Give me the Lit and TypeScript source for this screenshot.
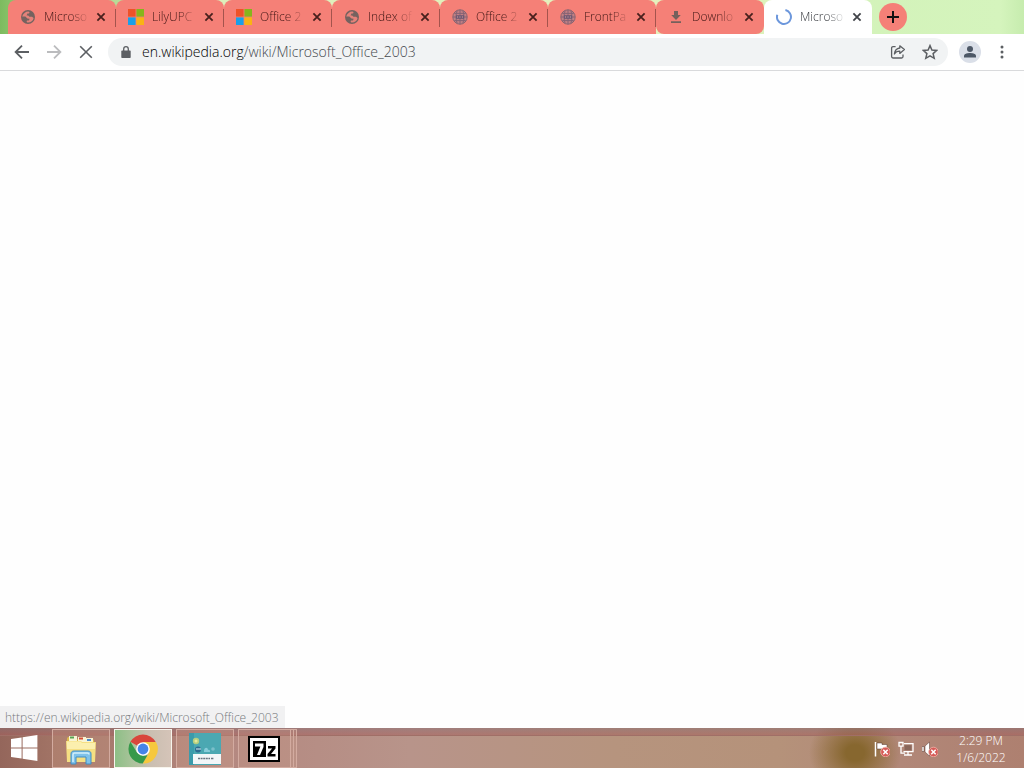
import { LitElement, html, css, svg } from "lit";
import { customElement, property } from "lit/decorators.js";
import { classMap } from "lit/directives/class-map.js";

const globe = html`<svg width="16" height="16" viewBox="0 0 16 16" aria-hidden="true">
  <circle cx="8" cy="8" r="7" fill="#75625f" />
  <path d="M2.200 7.600C3 4.400 5.600 2.400 8.400 2.400L9.600 3.200 9 4.600H7.400L6.600 6.400H8.200L9.400 7.800H12l1.600 1.200C13.200 12 10.600 13.800 7.400 13.600L6.600 12.800 7 11.400H9L9.600 9.800 7.400 9.400 5.400 7.600z" fill="#e4827a" />
</svg>`;

const windowsLogo = html`<svg width="16" height="16" viewBox="0 0 16 16" aria-hidden="true">
  <path fill="#ee5228" d="M0 0h7.600v7.600H0z" /><path fill="#86b51c" d="M8.400 0H16v7.600H8.400z" />
  <path fill="#1a9fe8" d="M0 8.400h7.600V16H0z" /><path fill="#f9b314" d="M8.400 8.400H16V16H8.400z" />
</svg>`;

const archive = html`<svg width="16" height="16" viewBox="0 0 16 16" aria-hidden="true" fill="none">
  <circle cx="8" cy="8" r="7.200" fill="#c08084" stroke="#8a6470" />
  <path d="M8 .8v14.400M1 8h14M2.400 4.400h11.200M2.400 11.600h11.200M5.200 1.600C3.600 5.600 3.600 10.400 5.200 14.400M10.800 1.600c1.600 4 1.600 8.800 0 12.800" stroke="#866374" />
  <path d="M4 6.200h8v3.600H4z" fill="#6d5872" /><path d="M5.600 7v2M8 7v2M10.400 7v2" stroke="#a9808c" />
</svg>`;

const download = html`<svg width="16" height="16" viewBox="0 0 16 16" aria-hidden="true">
  <path fill="#75605c" d="M6 2h4v4h2.800L8 11 3.200 6H6zM3 12.200h10V14H3z" />
</svg>`;

const spinner = html`<svg width="16" height="16" viewBox="0 0 16 16" aria-hidden="true">
  <path d="M9.400 1.100A7 7 0 1 1 1.300 5.800" fill="none" stroke="#6c97dc" stroke-width="2" />
</svg>`;

const closeIcon = html`<svg width="10" height="10" viewBox="0 0 10 10" aria-hidden="true">
  <path d="M1.400 1.400 8.600 8.600M8.600 1.400 1.400 8.600" fill="none" stroke="currentColor" stroke-width="1.800" />
</svg>`;

const badge = svg`<circle cx="11.500" cy="11" r="4.800" fill="#d65c58" stroke="#f3b4aa" stroke-width=".8" />
  <path d="m9.300 8.800 4.400 4.400m0-4.400-4.400 4.400" stroke="#fff" stroke-width="1.500" />`;

interface Tab {
  title: string;
  icon: unknown;
  active?: boolean;
}

const tabs: Tab[] = [
  { title: "Microso", icon: globe },
  { title: "LilyUPC", icon: windowsLogo },
  { title: "Office 2", icon: windowsLogo },
  { title: "Index of", icon: globe },
  { title: "Office 2", icon: archive },
  { title: "FrontPa", icon: archive },
  { title: "Downlo", icon: download },
  { title: "Microso", icon: spinner, active: true },
];

@customElement("tab-strip")
export class TabStrip extends LitElement {
  static styles = css`
    :host {
      display: flex;
      align-items: center;
      height: 34px;
      padding-left: 8px;
      background: linear-gradient(90deg, #7dbb5f 0, #8cc56c 14px, #dcefbb 200px, #e6f0bd 640px, #d3f3ba 880px, #d5f4bd 1000px, #c6ecae 100%);
    }
    .tabs {
      display: flex;
      flex: 0 1 864px;
      min-width: 0;
      height: 34px;
    }
    .tab {
      display: flex;
      flex: 1 1 0;
      align-items: center;
      box-sizing: border-box;
      min-width: 0;
      padding: 0 8px 0 12px;
      border-radius: 8px 8px 0 0;
      background: #f58077;
      color: #401615;
    }
    .tab.rule {
      background: linear-gradient(#a4544d, #a4544d) 100% 9px / 1px 18px no-repeat #f58077;
    }
    .tab.before {
      border-radius: 8px;
    }
    .tab.active {
      background: #fff;
      color: #34373c;
    }
    .icon {
      display: flex;
      flex: none;
      margin-right: 8px;
    }
    .title {
      flex: 1;
      min-width: 0;
      border: 0;
      padding: 0;
      background: none;
      color: inherit;
      font: inherit;
      text-align: left;
      white-space: nowrap;
      -webkit-mask-image: linear-gradient(90deg, #000 26px, transparent 46px);
      mask-image: linear-gradient(90deg, #000 26px, transparent 46px);
    }
    .close,
    .new {
      display: flex;
      flex: none;
      align-items: center;
      justify-content: center;
      border: 0;
      padding: 0;
      background: none;
    }
    .close {
      width: 14px;
      height: 14px;
      color: #48201d;
    }
    .active .close {
      color: #404348;
    }
    .new {
      width: 28px;
      height: 28px;
      margin-left: 7px;
      border-radius: 50%;
      background: #f58077;
      color: #111;
    }
  `;

  @property({ attribute: false }) tabs: Tab[] = [];

  render() {
    return html`
      <div class="tabs">
        ${this.tabs.map((tab, i) => {
          const before = !!this.tabs[i + 1]?.active;
          return html`<div class=${classMap({ tab: true, active: !!tab.active, before, rule: !tab.active && !before })}>
            <span class="icon">${tab.icon}</span>
            <button class="title">${tab.title}</button>
            <button class="close" aria-label="Close tab">${closeIcon}</button>
          </div>`;
        })}
      </div>
      <button class="new" aria-label="New tab">
        <svg width="12" height="12" viewBox="0 0 12 12" aria-hidden="true">
          <path d="M6 0v12M0 6h12" stroke="currentColor" stroke-width="2" />
        </svg>
      </button>
    `;
  }
}

@customElement("address-toolbar")
export class AddressToolbar extends LitElement {
  static styles = css`
    :host {
      display: flex;
      align-items: center;
      height: 36px;
      padding: 0 6px;
      border-bottom: 1px solid #d9dadc;
      background: #fff;
    }
    button {
      display: flex;
      flex: none;
      align-items: center;
      justify-content: center;
      width: 32px;
      height: 28px;
      border: 0;
      padding: 0;
      background: none;
      color: #5c5f63;
    }
    button:disabled {
      color: #bbbcbe;
    }
    .box {
      display: flex;
      flex: 1;
      align-items: center;
      min-width: 0;
      height: 28px;
      margin: 0 6px;
      padding-right: 2px;
      box-sizing: border-box;
      border-radius: 14px;
      background: #f1f3f4;
    }
    .lock {
      width: 34px;
      padding-left: 2px;
    }
    .address {
      position: relative;
      flex: 1;
      min-width: 0;
      font-size: 14px;
      font-weight: 300;
      line-height: 28px;
    }
    .address input {
      display: block;
      box-sizing: border-box;
      width: 100%;
      height: 28px;
      border: 0;
      padding: 0;
      outline: 0;
      background: none;
      color: transparent;
      font: inherit;
    }
    .shown {
      position: absolute;
      inset: 0;
      overflow: hidden;
      color: #44484d;
      white-space: nowrap;
      pointer-events: none;
    }
    .host {
      color: #000;
    }
    .avatar {
      width: 22px;
      height: 22px;
      margin: 0 5px;
      border-radius: 50%;
      background: #dadfe8;
      color: #4d5867;
    }
  `;

  render() {
    return html`
      <button aria-label="Back">
        <svg width="16" height="16" viewBox="0 0 16 16" fill="none" stroke="currentColor" stroke-width="1.800" aria-hidden="true">
          <path d="M15 8H2M8 1.600 1.600 8 8 14.400" />
        </svg>
      </button>
      <button aria-label="Forward" disabled>
        <svg width="16" height="16" viewBox="0 0 16 16" fill="none" stroke="currentColor" stroke-width="1.800" aria-hidden="true">
          <path d="M1 8h13M8 1.600 14.400 8 8 14.400" />
        </svg>
      </button>
      <button aria-label="Stop loading">
        <svg width="14" height="14" viewBox="0 0 14 14" fill="none" stroke="currentColor" stroke-width="1.600" aria-hidden="true">
          <path d="m1.200 1.200 11.600 11.600M12.800 1.200 1.200 12.800" />
        </svg>
      </button>
      <div class="box">
        <button class="lock" aria-label="Site information">
          <svg width="10" height="12" viewBox="0 0 10 12" aria-hidden="true">
            <path fill="currentColor" d="M1.300 4.400h7.400c.6 0 1 .4 1 1V11c0 .6-.4 1-1 1H1.300c-.6 0-1-.4-1-1V5.400c0-.6.4-1 1-1z" />
            <path fill="none" stroke="currentColor" stroke-width="1.300" d="M2.700 5V3a2.300 2.300 0 0 1 4.600 0v2" />
          </svg>
        </button>
        <div class="address">
          <input type="text" aria-label="Address" value="en.wikipedia.org/wiki/Microsoft_Office_2003" spellcheck="false" />
          <div class="shown" aria-hidden="true"><span class="host">en.wikipedia.org</span>/wiki/Microsoft_Office_2003</div>
        </div>
        <button aria-label="Share this page">
          <svg width="16" height="16" viewBox="0 0 16 16" fill="none" stroke="currentColor" stroke-width="1.300" aria-hidden="true">
            <path d="M5.600 2.600H3a1.400 1.400 0 0 0-1.400 1.400v8.600A1.400 1.400 0 0 0 3 14h8.600a1.400 1.400 0 0 0 1.400-1.400v-2" />
            <path d="M9.800 1.800 14.400 5.600 9.800 9.400V7.200C7.400 7.200 5.600 8 4.400 10c.4-3.400 2.200-5.600 5.400-6z" stroke-linejoin="round" />
          </svg>
        </button>
        <button aria-label="Bookmark this page">
          <svg width="16" height="16" viewBox="0 0 16 16" fill="none" stroke="currentColor" stroke-width="1.500" aria-hidden="true">
            <path d="m8 1.600 1.900 4.400 4.800.4-3.600 3.200 1.100 4.700L8 11.800l-4.200 2.500 1.100-4.700-3.600-3.200 4.800-.4z" />
          </svg>
        </button>
      </div>
      <button class="avatar" aria-label="Profile">
        <svg width="14" height="14" viewBox="0 0 14 14" fill="currentColor" aria-hidden="true">
          <circle cx="7" cy="4" r="3" /><path d="M1 12.600V11c0-2.200 3.400-3 6-3s6 .8 6 3v1.600z" />
        </svg>
      </button>
      <button aria-label="Menu">
        <svg width="4" height="14" viewBox="0 0 4 14" fill="currentColor" aria-hidden="true">
          <circle cx="2" cy="2" r="1.500" /><circle cx="2" cy="7" r="1.500" /><circle cx="2" cy="12" r="1.500" />
        </svg>
      </button>
    `;
  }
}

@customElement("task-bar")
export class TaskBar extends LitElement {
  static styles = css`
    :host {
      display: flex;
      height: 40px;
      background:
        linear-gradient(rgb(140 110 115 / 55%), rgb(165 95 93 / 55%)) 0 0 / 100% 7px no-repeat,
        linear-gradient(#a06f67, #a06f67) 0 7px / 100% 1px no-repeat,
        radial-gradient(ellipse 46px 40px at 83.500% 62%, #87672f 20%, rgb(135 103 47 / 0%)),
        linear-gradient(90deg, #94665b 0, #a17365 5%, #b48880 22%, #b8948a 40%, #b6947e 60%, #b5927a 76%, #b18778 88%, #ae8070 100%);
      color: #fff;
    }
    button {
      display: flex;
      align-items: center;
      justify-content: center;
      box-sizing: border-box;
      border: 0;
      padding: 0;
      background: none;
      color: inherit;
    }
    .start {
      width: 48px;
    }
    .apps {
      display: flex;
      flex: 1;
      gap: 4px;
      margin-left: 4px;
      padding-top: 1px;
    }
    .app {
      width: 58px;
      height: 39px;
      border: 1px solid #d3aba0;
      background: rgb(220 170 140 / 22%);
    }
    .app.current {
      border: 1px solid #f7f4ec;
      background: linear-gradient(90deg, #8dbf86 0, #a9c39a 30%, #c9beb0 60%, #d5c4b8 100%);
    }
    .app.stack {
      width: 59px;
      padding-right: 8px;
      background:
        linear-gradient(#d3aba0, #d3aba0) 51px 0 / 1px 100% no-repeat,
        linear-gradient(#d3aba0, #d3aba0) 54px 0 / 1px 100% no-repeat,
        rgb(220 170 140 / 14%);
    }
    .tray {
      display: flex;
      align-items: center;
      gap: 8px;
      padding: 2px 16px 0 0;
    }
    .clock {
      display: block;
      width: 54px;
      margin-left: 8px;
      font: inherit;
      line-height: 17px;
      text-align: center;
      white-space: nowrap;
    }
  `;

  render() {
    return html`
      <button class="start" aria-label="Start">
        <svg width="28" height="26" viewBox="0 0 28 26" fill="#fff" aria-hidden="true">
          <path d="M1 4 11.600 2.400V12.500H1zM12.600 2.200 27.400 0v12.500H12.600zM1 13.500h10.600v10.100L1 22zM12.600 13.500h14.800V26l-14.800-2.200z" />
        </svg>
      </button>
      <div class="apps">
        <button class="app" aria-label="File Explorer">
          <svg width="32" height="32" viewBox="0 0 32 32" aria-hidden="true">
            <path d="M2 6c0-1 .5-2 1.500-2h7L12 6h15c1 0 2 .6 2 2v20H2z" fill="#dcb84b" />
            <path d="M4 3h8v6H4zM13 4h8v6h-8zM21 5h7v6h-7z" fill="#f8f4d4" />
            <path d="M5 3.500h4v2H5z" fill="#58a454" /><path d="M14 4.500h4v2h-4z" fill="#d44d37" /><path d="M22 6h4v2h-4z" fill="#4b8ccd" />
            <path d="M1 8h15l1 1h14l-1 20H2z" fill="#f5df82" />
            <path d="M2 8.500h13.500L17 10h13v6H2z" fill="#fbefae" />
            <path d="M6 31V21c0-2 1-3 3-3h14c2 0 3 1 3 3v10h-5v-7H11v7z" fill="#7fc2ea" stroke="#408dc4" />
            <path d="M8 29v-7.500c0-1 .5-1.500 1.500-1.500h13c1 0 1.500.5 1.500 1.500" fill="none" stroke="#d2effb" stroke-width="1.500" />
          </svg>
        </button>
        <button class="app current" aria-label="Google Chrome">
          <svg width="30" height="30" viewBox="0 0 30 30" aria-hidden="true">
            <path d="M15 15 2.400 7.700A14.600 14.600 0 0 1 27.600 7.700z" fill="#d9463b" />
            <path d="M15 8H28a14.600 14.600 0 0 1-13.300 21.600L21 18.500z" fill="#f6c83e" />
            <path d="M2.400 7.700 9 18.500l6 3.300 4.500-.5-4.800 8.300A14.600 14.600 0 0 1 2.400 7.700z" fill="#36994a" />
            <circle cx="15" cy="15" r="6.800" fill="#fff" /><circle cx="15" cy="15" r="5.400" fill="#4684e8" />
          </svg>
        </button>
        <button class="app" aria-label="Control Panel">
          <svg width="32" height="32" viewBox="0 0 32 32" aria-hidden="true">
            <path d="M0 0h32v32H0z" fill="#4ba8b2" /><path d="M0 0h5v32H0z" fill="#3b9bab" />
            <circle cx="7" cy="8" r="3.200" fill="#b6cf80" /><circle cx="7" cy="8" r="1.500" fill="#e5e99c" />
            <circle cx="9" cy="16.500" r="3" fill="#2d6b91" /><path d="M7 16h5" stroke="#dcf0f3" />
            <path d="M15 18c0-4 4-4 4-1 2-1 2 1 2 2h-6z" fill="#86ccd9" /><circle cx="24" cy="16" r="1.800" fill="#7abfca" />
            <path d="M4 21h28v10H4z" fill="#f2f6f8" /><path d="M9 25.500h12M22 25.500h3" stroke="#697580" stroke-width="1.500" stroke-dasharray="2 .6" />
          </svg>
        </button>
        <button class="app stack" aria-label="7-Zip">
          <svg width="32" height="26" viewBox="0 0 32 26" aria-hidden="true">
            <path d="M0 0h32v26H0z" fill="#000" /><path d="M2 2h28v22H2z" fill="#fff" />
            <path d="M5 5h13v16H5z" fill="#000" />
            <path d="M7 7.500h8.500V11L12 19H9l3.400-8.500H7z" fill="#fff" />
            <path d="M20 10h7.500v2.500L23 18h4.500v2.500h-8V18l4.600-5.500H20z" fill="#000" />
          </svg>
        </button>
      </div>
      <div class="tray">
        <button aria-label="Action Center">
          <svg width="16" height="16" viewBox="0 0 16 16" aria-hidden="true">
            <path d="M1.500 1v14.500" stroke="#fff" stroke-width="1.500" /><path d="M3 2h5v1.500h5V9H8V8H3z" fill="#fff" stroke="#57372e" stroke-width=".5" />${badge}
          </svg>
        </button>
        <button aria-label="Network">
          <svg width="16" height="16" viewBox="0 0 16 16" fill="none" stroke="#fff" stroke-width="1.300" aria-hidden="true">
            <path d="M6 2.600h9v8H5.500" /><path d="M6.500 4.200h7v5h-7z" fill="#8a675b" stroke="none" />
            <path d="M1 1.500h4v3.600H1zM3 5.500v6.700h4M10 10.500v3M6 14h8" />
          </svg>
        </button>
        <button aria-label="Volume, muted">
          <svg width="16" height="16" viewBox="0 0 16 16" aria-hidden="true">
            <path d="M0 5.500h2v5H0zM3 5l4.500-4v14L3 11z" fill="#fff" stroke="#57372e" stroke-width=".5" />${badge}
          </svg>
        </button>
        <button class="clock"><time>2:29 PM<br />1/6/2022</time></button>
      </div>
    `;
  }
}

@customElement("app-root")
export class AppRoot extends LitElement {
  static styles = css`
    :host {
      display: flex;
      flex-direction: column;
      height: 100vh;
      overflow: hidden;
      background: #fff;
      font: 300 12px/16px "Open Sans", "Noto Sans", sans-serif;
    }
    tab-strip,
    address-toolbar,
    task-bar {
      flex: none;
    }
    .page {
      position: relative;
      flex: 1;
      min-height: 0;
      background: #fefefe;
    }
    .status {
      position: absolute;
      bottom: 0;
      left: 0;
      padding: 4px 6px 2px 5px;
      background: #f1f1f2;
      color: #77797d;
    }
  `;

  render() {
    return html`
      <tab-strip .tabs=${tabs}></tab-strip>
      <address-toolbar></address-toolbar>
      <main class="page">
        <div class="status" role="status">https://en.wikipedia.org/wiki/Microsoft_Office_2003</div>
      </main>
      <task-bar></task-bar>
    `;
  }
}
